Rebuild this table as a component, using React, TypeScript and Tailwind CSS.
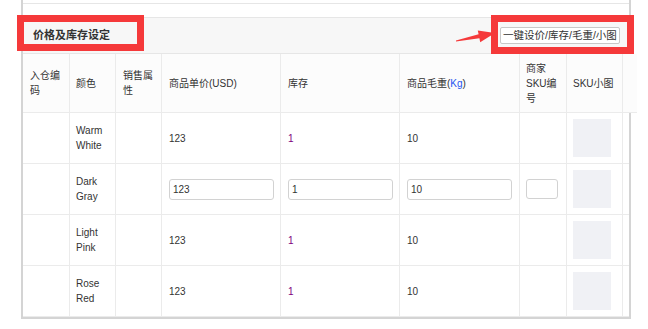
const HEAD = ['入仓编码', '颜色', '销售属性', '商品单价(USD)', '库存', '商品毛重', '商家SKU编号', 'SKU小图', ''];

const ROWS = [
  { name: 'Warm White', edit: false },
  { name: 'Dark Gray', edit: true },
  { name: 'Light Pink', edit: false },
  { name: 'Rose Red', edit: false },
];

const cell = 'border-r border-b border-[#ebebeb] flex items-center';

function Field({ value, w }: { value: string; w: string }) {
  return (
    <input
      readOnly
      defaultValue={value}
      className={`${w} h-[21px] border border-[#d2d2d2] rounded-[3px] px-[3px] text-[10px] text-[#333] bg-white outline-none`}
    />
  );
}

export default function App() {
  return (
    <div className="relative w-[648px] h-[329px] bg-white overflow-hidden text-[#333]" style={{ fontFamily: '"Liberation Sans", "Noto Sans CJK SC", sans-serif' }}>
      <div className="ml-[21px] w-[610px] h-[319px] border-x-2 border-b-2 border-[#d4d4d4]">
        <div className="h-[3px]" />
        <div className="h-[14px] border-t border-[#e6e6e6]" />

        {/* section header */}
        <div className="h-[37px] border-y border-[#e6e6e6] bg-[#f7f7f7] flex items-center justify-between pl-[10px] pr-[9px]">
          <span className="text-[11px] font-bold">价格及库存设定</span>
          <button className="h-[17px] w-[120px] px-0 border border-[#c8c8c8] rounded-[2px] bg-white text-[10.5px] leading-none text-[#333] whitespace-nowrap">
            一键设价/库存/毛重/小图
          </button>
        </div>

        {/* sku table */}
        <div className="grid grid-cols-[47px_46px_46px_119px_119px_120px_47px_56px_6px] text-[10px] leading-[15px]">
          {HEAD.map((h, i) => (
            <div key={i} className={`${cell} h-[59px] bg-[#fcfcfc] ${i === 8 ? 'border-r-0' : ''} ${i === 1 || i === 6 || i === 7 ? 'pl-[6px] pr-[8px]' : 'px-[7px]'}`}>
              {i === 5 ? <span>商品毛重(<span className="text-[#1f55f0]">Kg</span>)</span> : <span>{h}</span>}
            </div>
          ))}

          {ROWS.map(r => (
            <div key={r.name} className="contents">
              <div className={`${cell} h-[51px]`} />
              <div className={`${cell} h-[51px] pl-[6px] pr-[8px]`}>{r.name}</div>
              <div className={`${cell} h-[51px]`} />
              <div className={`${cell} h-[51px] px-[7px]`}>
                {r.edit ? <Field value="123" w="w-[105px]" /> : '123'}
              </div>
              <div className={`${cell} h-[51px] px-[7px] text-[#800080]`}>
                {r.edit ? <Field value="1" w="w-[105px]" /> : '1'}
              </div>
              <div className={`${cell} h-[51px] px-[7px]`}>
                {r.edit ? <Field value="10" w="w-[105px]" /> : '10'}
              </div>
              <div className={`${cell} h-[51px] px-[6px]`}>
                {r.edit && <input readOnly className="w-[32px] h-[20px] border border-[#d2d2d2] rounded-[3px] bg-white outline-none" />}
              </div>
              <div className={`${cell} h-[51px] pl-[6px]`}>
                <div className="w-[38px] h-[38px] bg-[#f0f1f5]" />
              </div>
              <div className="border-b border-[#ebebeb] h-[51px]" />
            </div>
          ))}
        </div>
      </div>

      {/* callouts */}
      <div className="absolute left-[17px] top-[15px] w-[127px] h-[36px] border-[7px] border-[#f5393a]" />
      <div className="absolute left-[491px] top-[15px] w-[143px] h-[39px] border-[7px] border-[#f5393a]" />
      <svg className="absolute left-[450px] top-[25px]" width="50" height="22" viewBox="0 0 50 22">
        <polygon points="6,15.6 28.6,9.3 27.8,5.4 45,8 30.2,17.2 29.4,13.3 6,16.4" fill="#f5393a" />
      </svg>
    </div>
  );
}
